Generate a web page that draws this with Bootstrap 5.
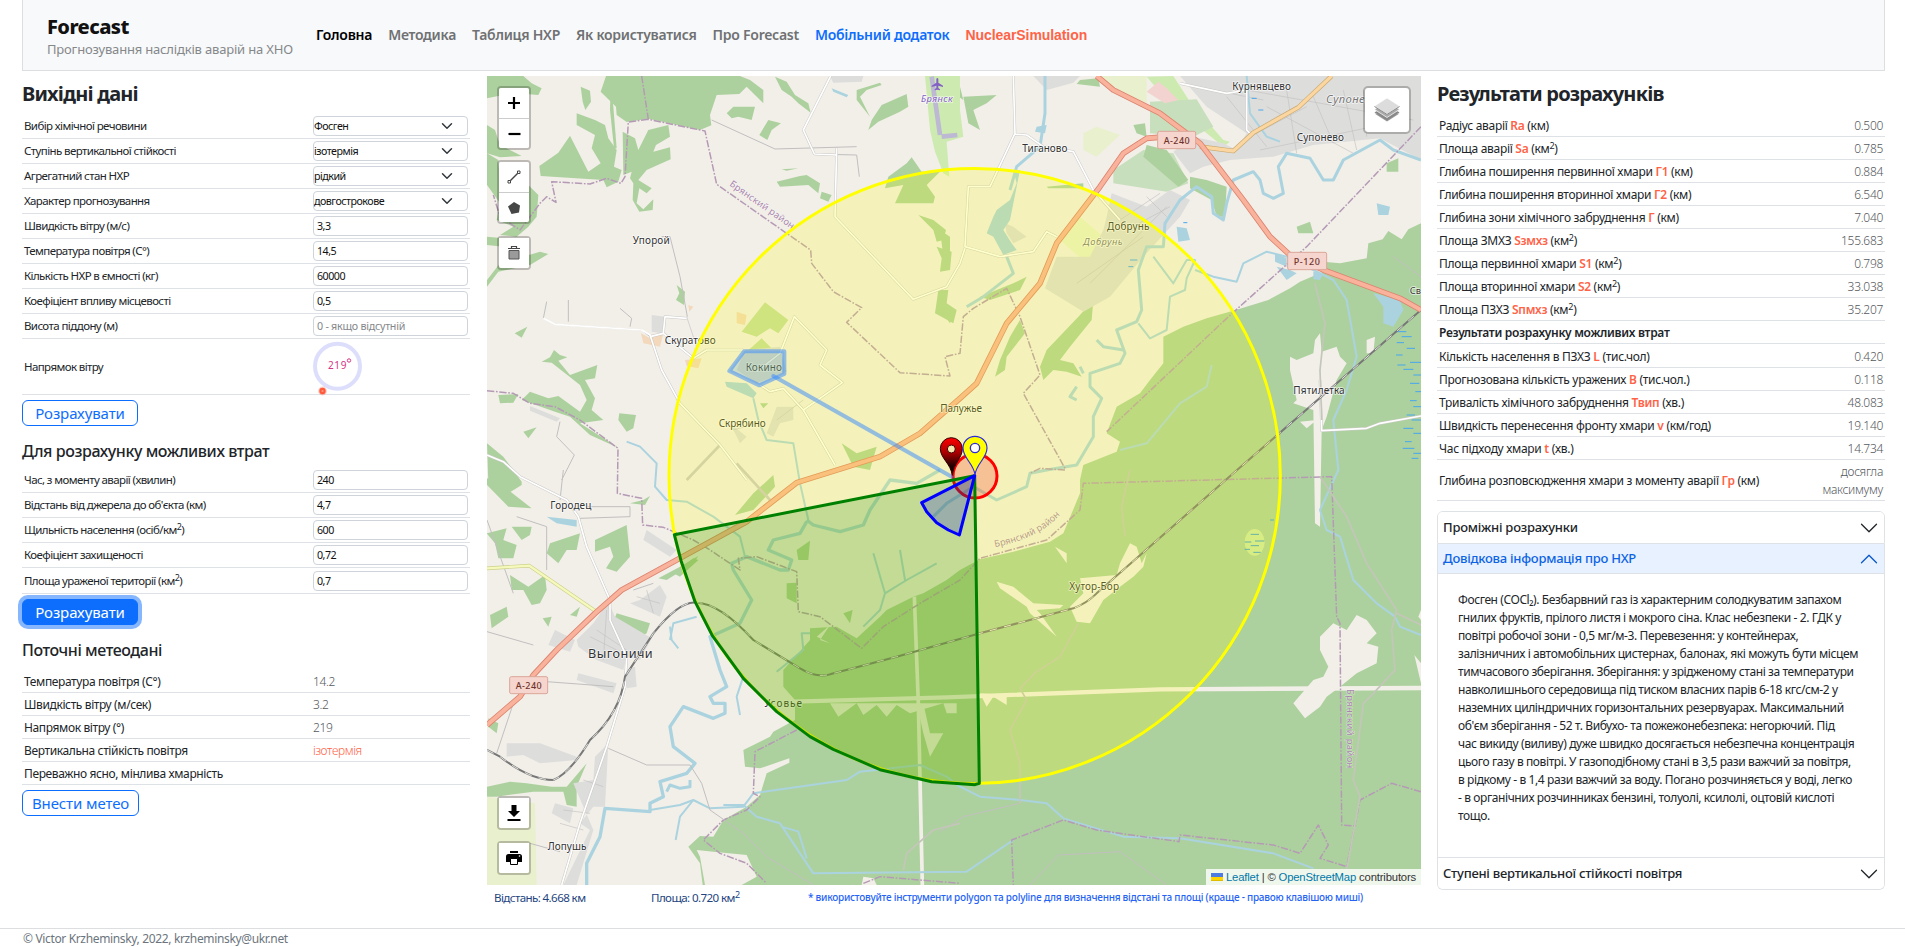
<!DOCTYPE html>
<html lang="uk">
<head>
<meta charset="utf-8">
<title>Forecast</title>
<meta name="viewport" content="width=device-width, initial-scale=1">
<link href="https://cdn.jsdelivr.net/npm/bootstrap@5.3.0/dist/css/bootstrap.min.css" rel="stylesheet">
<style>
body{font-family:"Noto Sans","Open Sans",sans-serif;font-size:12px;color:#212529;height:947px;overflow:hidden}
.top-bar{margin:0 20px 0 22px;height:71px;background:#f8f9fa;border:1px solid #dcdee0;border-top:0;padding:0 24px}
.brand-box{width:269px}
.brand-name{font-size:20px;line-height:24px;font-weight:800;color:#111;letter-spacing:-.55px;padding-top:3px}
.brand-sub{font-size:13px;line-height:20px;color:#85888b;letter-spacing:-.18px}
.top-bar .nav-link{font-size:14px;font-weight:600;padding:0;margin-right:16px;color:#6f7173;letter-spacing:-.26px;white-space:nowrap;line-height:20px}
.top-bar .nav-link.active{color:#000}
.top-bar .nav-link.app{color:#0d6efd}
.top-bar .nav-link.nuc{color:#ff6347;font-family:"Liberation Sans",sans-serif;font-weight:700;letter-spacing:-.08px}
.work-area{grid-template-columns:465px 950px 448px;padding-left:22px;height:857px}
.h-main{font-size:20px;font-weight:700;line-height:46px;height:43px;margin:0;letter-spacing:-.8px}
.h-sub{font-size:16px;font-weight:500;margin:0;letter-spacing:-.42px;line-height:20px}
.line-row{height:25px;border-bottom:1px solid #dee2e6;padding:0 2px;letter-spacing:-.38px;font-weight:400}
.line-row .lbl{width:289px;white-space:nowrap}
.params .lbl{font-size:11.5px;letter-spacing:-.6px}
.line-row .form-control,.line-row .form-select{width:155px;height:20px;min-height:0;font-size:10.7px;line-height:18px;padding:0 3px;color:#111;letter-spacing:-.5px;border-color:#ced4da;border-radius:4px}
.line-row .form-select{padding-left:0}
.line-row .form-control::placeholder{color:#85888b;opacity:1;letter-spacing:-.25px}
.line-row.h23{height:23px;padding-top:2px}
.line-row sup{font-size:9px;top:-.45em}
.line-row b.v{color:#ff6347;font-weight:600}
.res-col .line-row{letter-spacing:-.3px}
.line-row .num{color:#55595d;font-weight:300;text-align:right;line-height:18px}
.wind{height:56px}
.btn-main{width:116px;height:26px;padding:0;font-size:15px;line-height:22px;border-radius:6px;letter-spacing:-.1px}
.btn-glow{box-shadow:0 0 0 4px #86b7fe!important}
.map-box{width:934px;height:809px;margin-top:5px;overflow:hidden}
.map-box svg.tiles{display:block;width:934px;height:809px}
.ctl{border:2px solid rgba(0,0,0,.22);border-radius:4px;background-clip:padding-box;width:34px}
.ctl span{width:30px;height:30px;background:#fff;display:flex;align-items:center;justify-content:center}
.ctl span+span{border-top:1px solid #ccc}
.ctl span:first-child{border-radius:2px 2px 0 0}
.ctl span:last-child{border-radius:0 0 2px 2px}
.ctl-tl{left:10px;top:10px}
.ctl-bl{left:10px;bottom:10px}
.layers{right:10px;top:10px;width:48px;height:48px;background:#fff;border:2px solid rgba(0,0,0,.22);border-radius:5px;background-clip:padding-box}
.attrib{right:0;bottom:0;background:rgba(255,255,255,.8);font:11.3px/16px "Liberation Sans",sans-serif;padding:0 5px;height:16px;width:215px;color:#333;white-space:nowrap;letter-spacing:-.17px}
.attrib a{color:#0078a8;text-decoration:none}
.under-map{height:26px;width:934px;padding-left:7px;color:#1e4580;letter-spacing:-.6px;font-size:11.6px}
.under-map .hint{color:#2563f5;font-size:10px;font-weight:500;letter-spacing:-.25px;padding-bottom:2px;white-space:nowrap}
.accordion{--bs-accordion-btn-padding-x:5px;--bs-accordion-btn-padding-y:0;--bs-accordion-active-bg:#e7f1ff;--bs-accordion-active-color:#0c63e4;--bs-accordion-border-color:#dee2e6;--bs-accordion-body-padding-x:20px;margin-top:10px}
.accordion .accordion-button{height:31px;font-size:13px;font-weight:500;letter-spacing:-.25px;color:#212529;box-shadow:none}
.accordion .accordion-button:not(.collapsed){color:#0c63e4;height:29px}
.accordion .accordion-body{height:284px;border-top:1px solid #dee2e6;padding:17px 20px 0;line-height:18px;white-space:nowrap;letter-spacing:-.4px}
.foot{border-top:1px solid #dcdee0;height:19px;line-height:20px;padding-left:23px;color:#6c757d;letter-spacing:-.35px}
</style>
</head>
<body>
<header class="top-bar d-flex align-items-center">
  <div class="brand-box">
    <div class="brand-name">Forecast</div>
    <div class="brand-sub">Прогнозування наслідків аварій на ХНО</div>
  </div>
  <nav class="nav flex-nowrap">
    <a class="nav-link active" href="#">Головна</a>
    <a class="nav-link" href="#">Методика</a>
    <a class="nav-link" href="#">Таблиця НХР</a>
    <a class="nav-link" href="#">Як користуватися</a>
    <a class="nav-link" href="#">Про Forecast</a>
    <a class="nav-link app" href="#">Мобільний додаток</a>
    <a class="nav-link nuc" href="#">NuclearSimulation</a>
  </nav>
</header>

<main class="work-area d-grid">
  <section style="width:448px">
    <h1 class="h-main">Вихідні дані</h1>
    <div class="params">
    <div class="line-row d-flex align-items-center"><span class="lbl">Вибір хімічної речовини</span><select class="form-select"><option>Фосген</option></select></div>
    <div class="line-row d-flex align-items-center"><span class="lbl">Ступінь вертикальної стійкості</span><select class="form-select"><option>ізотермія</option></select></div>
    <div class="line-row d-flex align-items-center"><span class="lbl">Агрегатний стан НХР</span><select class="form-select"><option>рідкий</option></select></div>
    <div class="line-row d-flex align-items-center"><span class="lbl">Характер прогнозування</span><select class="form-select"><option>довгострокове</option></select></div>
    <div class="line-row d-flex align-items-center"><span class="lbl">Швидкість вітру (м/с)</span><input class="form-control" value="3,3"></div>
    <div class="line-row d-flex align-items-center"><span class="lbl">Температура повітря (С°)</span><input class="form-control" value="14,5"></div>
    <div class="line-row d-flex align-items-center"><span class="lbl">Кількість НХР в ємності (кг)</span><input class="form-control" value="60000"></div>
    <div class="line-row d-flex align-items-center"><span class="lbl">Коефіцієнт впливу місцевості</span><input class="form-control" value="0,5"></div>
    <div class="line-row d-flex align-items-center"><span class="lbl">Висота піддону (м)</span><input class="form-control" placeholder="0 - якщо відсутній"></div>
    <div class="line-row wind d-flex align-items-center"><span class="lbl">Напрямок вітру</span>
      <svg width="56" height="56" viewBox="0 0 56 56" overflow="visible" font-family="Noto Sans"><circle cx="24.5" cy="27.3" r="22.5" fill="none" stroke="#dddefb" stroke-width="4"/><text x="15" y="30" font-size="10" fill="#d63384" textLength="18">219</text><circle cx="36" cy="21.5" r="1.7" fill="none" stroke="#d63384"/><circle cx="9.5" cy="52" r="4.4" fill="#ff6347" opacity=".3"/><circle cx="9.5" cy="52" r="3.2" fill="#ff5a3c"/><circle cx="9.5" cy="52" r="1.1" fill="#ff9a80"/></svg>
    </div>
    </div>
    <button class="btn btn-outline-primary btn-main d-block" style="margin-top:5px">Розрахувати</button>
    <h2 class="h-sub" style="padding-top:15px;height:42px">Для розрахунку можливих втрат</h2>
    <div class="params">
    <div class="line-row d-flex align-items-center"><span class="lbl">Час, з моменту аварії (хвилин)</span><input class="form-control" value="240"></div>
    <div class="line-row d-flex align-items-center"><span class="lbl">Відстань від джерела до об'єкта (км)</span><input class="form-control" value="4,7"></div>
    <div class="line-row d-flex align-items-center"><span class="lbl">Щильність населення (осіб/км<sup>2</sup>)</span><input class="form-control" value="600"></div>
    <div class="line-row d-flex align-items-center"><span class="lbl">Коефіцієнт захищеності</span><input class="form-control" value="0,72"></div>
    <div class="line-row d-flex align-items-center" style="height:26px"><span class="lbl">Площа ураженої території (км<sup>2</sup>)</span><input class="form-control" value="0,7"></div>
    </div>
    <button class="btn btn-primary btn-main btn-glow d-block" style="margin-top:5px">Розрахувати</button>
    <h2 class="h-sub" style="padding-top:15px;height:45px">Поточні метеодані</h2>
    <div class="line-row h23 d-flex align-items-center"><span class="lbl">Температура повітря (С°)</span><span class="num">14.2</span></div>
    <div class="line-row h23 d-flex align-items-center"><span class="lbl">Швидкість вітру (м/сек)</span><span class="num">3.2</span></div>
    <div class="line-row h23 d-flex align-items-center"><span class="lbl">Напрямок вітру (°)</span><span class="num">219</span></div>
    <div class="line-row h23 d-flex align-items-center"><span class="lbl">Вертикальна стійкість повітря</span><span class="num" style="color:#ff6347">ізотермія</span></div>
    <div class="line-row h23 d-flex align-items-center"><span class="lbl">Переважно ясно, мінлива хмарність</span></div>
    <button class="btn btn-outline-primary btn-main d-block" style="margin-top:5px;width:117px">Внести метео</button>
  </section>

  <section>
    <div class="map-box position-relative">
      <svg class="tiles" viewBox="21 18 2802 2427" font-family="Noto Sans" stroke-linejoin="round">
        <rect x="0" y="0" width="2850" height="2500" fill="#f2efe9"/>
        <!-- woods -->
        <g fill="#add19e">
          <path d="M2823,460 2785,478 2765,508 2725,483 2708,508 2665,520 2660,565 2580,580 2530,575 2530,605 2460,635 2430,655 2365,690 2260,722 2180,745 2110,770 2050,800 2050,880 2010,930 1980,970 1910,1010 1880,1090 1920,1115 1910,1145 1810,1185 1800,1230 1800,1270 1750,1390 1710,1415 1600,1445 1500,1468 1440,1500 1400,1530 1330,1570 1300,1580 1220,1620 1200,1640 1130,1705 1070,1670 990,1675 990,1710 910,1800 910,1850 945,1890 945,1950 880,1985 870,2000 790,2040 795,2090 840,2095 928,2065 928,2078 860,2110 840,2175 800,2210 730,2250 700,2300 660,2298 625,2330 660,2380 668,2445 675,2445 660,2360 650,2340 700,2345 800,2355 830,2420 785,2445 2823,2445Z"/>
          <path d="M378,18 362,65 408,110 410,135 440,156 505,146 660,180 694,166 690,135 710,75 778,72 800,50 850,100 850,60 810,30 780,18Z"/>
          <path d="M302,50 330,62 333,95 316,120 308,95Z"/>
          <path d="M290,130 345,150 375,165 385,205 410,240 402,290 425,300 415,335 380,352 370,330 182,318 178,288 235,248 270,197 325,305 362,280 335,235 345,195 290,165Z"/>
          <path d="M428,185 465,205 475,240 505,180 565,165 570,200 528,225 520,245 570,232 572,268 500,300 475,330 515,355 500,370 478,355 470,400 490,418 520,388 518,420 478,425 458,390 460,340 450,325 455,305 430,315Z"/>
          <path d="M392,45 400,110 410,235 402,235 390,120Z"/>
          <path d="M21,18H130L155,40 185,55 175,75 110,70 55,78 21,85Z M21,165 45,180 60,225 125,258 60,262 21,250Z M21,250 55,270 60,340 130,330 175,375 170,440 145,470 110,500 60,495 100,470 50,450 60,400 21,345Z M21,500 70,505 70,530 21,525Z M130,560 180,545 205,552 150,585 55,605 21,650 21,630 60,580Z"/>
          <path d="M104,790 142,770 125,803Z M222,840 240,855 262,862 235,872 270,915 352,885 345,925 315,930 345,985 335,1020 370,1050 300,1060 340,1085 418,1135 330,1095 270,1040 225,1025 125,990 150,965 205,985 235,978 300,1025 320,990 300,945 262,915 215,878 185,875 210,862Z M55,975 115,972 100,998 60,1000Z M418,1030 468,1035 460,1075 440,1085 415,1050Z M130,1085 170,1072 145,1105Z"/>
          <path d="M590,645 615,665 612,705 588,690 598,670Z M740,130 760,110 825,110 815,150 775,140 755,145Z M865,150 903,160 875,180 862,210 838,195Z M885,20 920,35 945,75 985,100 992,128 955,100 935,80 905,60Z M1130,60 1200,38 1205,45 1160,60 1140,80 1170,140 1130,90Z M1205,105 1280,72 1285,110 1260,125 1195,155 1165,180 1175,150Z M890,335 960,318 980,315 1020,340 1015,370 985,345 900,350Z M905,298 955,295 920,302Z M1280,280 1295,262 1325,305 1380,305 1340,345 1365,380 1360,400 1270,400 1245,400 1270,345 1215,355 1225,320Z M1315,435 1360,450 1398,480 1390,510 1370,515 1360,480Z M1370,530 1415,545 1410,600 1380,605 1385,565Z M1025,365 1055,375 1045,395 1020,385Z"/>
          <path d="M1400,55 1440,50 1450,90Z M1450,80 1550,75 1520,100 1480,120 1500,180 1465,160Z M1375,660 1405,660 1400,700 1430,720 1420,760 1365,730Z M1085,1120 1130,1150 1190,1130 1170,1200 1120,1190Z M840,1000 865,1000 850,1015Z"/>
          <!-- south-west groves -->
          <path d="M21,1120 70,1160 125,1235 125,1245 85,1270 25,1240Z M21,1225 60,1240 155,1315 85,1310 21,1245Z M20,1390 80,1375 70,1410 110,1425 100,1465 55,1465 45,1420Z M95,1370 155,1370 150,1395 125,1410Z M210,1420 300,1390 290,1440 260,1440 235,1480 200,1450Z M345,1410 440,1365 450,1460 410,1505 378,1495 400,1460 390,1430 345,1445Z M90,1515 145,1550 195,1515 200,1560 180,1600 155,1605 130,1560 95,1560Z M30,1635 80,1610 85,1640 35,1675Z M188,1645 215,1640 205,1670Z M410,1630 510,1660 500,1690 475,1705 400,1655Z M535,1525 600,1490 655,1458 640,1480 560,1530Z M270,1635 300,1610 290,1640Z M21,2150 90,2135 140,2140 215,2150 260,2150 320,2080 290,2150 290,2210 260,2205 250,2165 160,2165 50,2180 21,2180Z M25,1945 55,1960 50,1990 25,1970Z M490,1290 510,1278 495,1305 450,1300Z"/>
          <!-- river-side woods in the centre and north -->
          <path d="M1800,735 1840,690 1835,750 1770,830 1740,870 1780,880 1805,920 1760,905 1720,900 1690,930 1680,890 1700,840Z M1620,750 1635,790 1580,860 1575,900 1545,920 1560,870 1590,800Z M1500,680 1600,640 1640,620 1620,660 1530,690Z M1700,350 1810,340 1810,355 1705,355Z M1960,165 1995,160 2000,200 1970,190Z M1800,30 1855,25 1860,50 1790,42Z M2450,470 2490,455 2500,490 2455,490Z M2720,280 2755,265 2755,305 2720,305Z M1380,480 1410,500 1410,545 1390,560Z M1380,720 1420,740 1410,760Z M820,1270 880,1215 885,1250 820,1320 765,1335Z M950,1440 990,1412 985,1470 955,1470Z M920,1540 950,1538 950,1600 920,1585Z M1090,1630 1118,1620 1110,1660Z M580,1510 640,1465 655,1470 600,1520Z"/>
        </g>
        <!-- pastures, meadows and airfield -->
        <path fill="#cdebb0" d="M1335,18H1440V120L1450,200 1400,215 1408,320 1390,310 1365,245 1350,180Z M2000,20 2080,18 2130,95 2230,210 2250,215 2230,230 2180,190 2060,90Z"/>
        <path fill="#c3dd9f" d="M785,785 855,697 925,750 895,790 870,775 830,800Z M800,845 845,805 880,840 850,870Z"/>
        <path fill="#e9f0cd" d="M1850,18H2000V100L1890,55Z M1810,190 1850,170 1920,195 1850,260 1810,240Z M21,2180 165,2200 170,2445 21,2445Z M1740,510 1800,440 1870,500 1820,580Z"/>
        <path fill="#c8dfbd" d="M2010,95 2150,88 2200,170 2140,200 2010,190Z M1900,300 1990,240 2080,250 2125,340 2060,365 1900,340Z"/>
        <path fill="#add19e" d="M2060,240 2125,330 2095,350 1990,260 2000,225Z M2130,320 2180,330 2240,350 2235,440 2210,440 2195,390 2130,355Z"/>
        <path fill="#f3d3cf" d="M2000,65 2035,35 2060,55 2095,90 2055,100Z"/>
        <path fill="#f3d8bb" d="M483,790 510,805 550,790 540,830 490,820Z M770,725 800,735 795,765 770,760Z M615,870 665,865 655,895 620,888Z M625,705 640,710 628,725Z"/>
        <path fill="none" stroke="#bdb8d3" stroke-width="14" d="M1355,20 1380,195 M1385,200 1432,195"/>
        <!-- built-up areas -->
        <g fill="#dddddc">
          <path d="M2100,18H2823V270L2700,205 2500,225 2380,260 2250,270 2170,290 2130,310 2080,245 2140,200 2230,220 2270,240 2300,190 2180,110Z"/>
          <path d="M2000,410 2070,360 2130,390 2100,440 1990,560 1890,680 1810,725 1695,655 1730,560 1830,560 1870,480 1880,440 1895,370Z"/>
          <path d="M1050,18H1150L1145,35 1060,38Z M1660,18H1800L1780,38 1700,60Z M515,735 555,740 545,790 515,785Z M795,840 900,830 920,905 830,940 770,900Z M1575,460 1600,470 1640,500 1600,520 1580,490Z"/>
          <path d="M385,1595 405,1640 515,1705 480,1770 440,1760 430,1800 350,1770 295,1730 290,1710 340,1660Z M480,1590 540,1545 560,1580 540,1640 450,1600Z M225,1680 285,1710 270,1745 205,1725Z M440,1800 465,1790 470,1850 440,1855Z M295,1810 410,1840 400,1870 290,1830Z M345,2060 385,2020 375,2210 340,2210 300,2260 330,2280 250,2445 290,2445 340,2280 280,2140 340,2130Z M500,1380 590,1440 570,1460 490,1410Z M80,2020 180,2020 290,2060 290,2070 180,2080 130,2055 80,2060Z M225,2200 280,2215 270,2260 215,2230Z M150,1008 240,1045 230,1055 150,1022Z M750,1060 800,1100 780,1120Z M890,1010 940,1010 940,1050 900,1060 880,1100 860,1090Z"/>
        </g>
        <g fill="none" stroke="#c4c3c3" stroke-width="2">
          <path d="M2300,60 2800,150 M2360,110 2620,250 M2420,60 2450,250 M2500,80 2560,220 M2590,60 2630,240 M2650,60 2660,200 M2310,200 2480,110 M2340,240 2680,170 M2240,80 2360,230 M2200,60 2350,90 M1920,450 2040,370 M1940,480 2070,410 M1830,640 2060,410 M1790,640 1990,500 M2000,380 2060,440"/>
          <path d="M330,1700 410,1740 M350,1680 440,1740 M380,1620 370,1770 M470,1580 540,1600 M500,1560 520,1630 M250,2220 330,2230 M240,2260 310,2280 M310,2130 370,2150 M620,740 650,830 M760,1080 830,1060 M890,1050 970,990"/>
        </g>
        <!-- clearings in the eastern forest -->
        <g fill="#f2efe9">
          <path d="M2505,810 2520,790 2525,845 2570,830 2580,860 2600,880 2570,930 2540,1040 2525,1080 2520,1370 2505,1360 2500,1020 2440,1000 2450,990 2430,900 2430,860 2450,870 2500,850Z M2460,1055 2510,1050 2480,1075Z M2660,810 2685,800 2680,850 2660,850Z"/>
          <path d="M2520,1700 2560,1660 2600,1680 2630,1635 2660,1650 2690,1690 2660,1720 2695,1730 2690,1780 2630,1810 2580,1850 2540,1880 2520,1910 2475,1945 2440,1900 2500,1830 2530,1820 2545,1790 2520,1740Z M2823,1620 2815,1640 2823,1650Z M2803,1755 2823,1780 2823,1840Z M1150,2420 1180,2425 1190,2445 1145,2445Z"/>
          <path d="M1800,1525 1910,1515 1920,1480 1950,1420 1970,1430 1985,1480 2000,1450 1990,1490 1960,1520 1920,1550 1870,1590 1830,1660 1790,1655 1770,1610 1810,1570Z M1550,1535 1600,1550 1660,1600 1750,1605 1740,1615 1670,1620 1680,1630 1730,1700 1650,1630 1640,1610 1560,1555Z M1725,1430 1760,1450 1760,1480Z M1010,1700 1050,1665 1020,1710 1050,1720Z"/>
          <path d="M1050,1900H1430V1930H1400L1390,1900 1290,1930 1250,1905 1220,1940 1190,1905 1150,1935 1130,1900 1075,1940Z M1310,1900H1330L1350,1990 1390,1990 1350,2060 1330,1990Z M1500,1870 1580,1875 1580,1905 1540,1880 1520,1910Z"/>
        </g>
        <g fill="none" stroke="#f2efe9">
          <path stroke-width="13" d="M940,1895 1400,1882 2040,1858 2823,1854"/>
          <path stroke-width="11" d="M1303,1580 1315,1900 1327,2445"/>
        </g>
        <!-- rivers -->
        <g fill="none" stroke="#aad3df" stroke-width="9">
          <path d="M1695,18 1695,130 1680,230 1610,290 1590,360 M1580,560 1600,610 1510,680 1460,710"/>
          <path d="M2823,270 2740,240 2700,210 2590,270 2560,330 2530,330 2490,265 2420,250 2395,290 2410,370 2380,385 2350,370 2340,330 2320,305 2260,330 2240,400 2230,450 2200,430 2195,380 2150,350 2100,390 2055,460 2050,530 2000,530 1975,600 1985,720 1970,755 1910,780 1935,850 1920,880 1830,910 1830,950 1865,985 1840,1040 1840,1100 1790,1185 1700,1200 1650,1210 1640,1250 1550,1290 1480,1250 1400,1300 1360,1340"/>
          <path stroke-width="6" d="M2020,560 2080,640 2120,570 2145,570 2120,625 2115,660 2070,680 2060,780 2010,805 1975,760 M2145,600 2200,620 2270,635 2290,580 2360,545 2420,560 2500,600 2560,630 2600,690 2630,860 2600,960 2560,1050 2575,1200 2520,1320 2540,1380 2580,1400 2620,1530 2690,1600 2745,1640 2760,1670 2823,1695 M2300,18 2310,130 2360,200 2400,215"/>
          <path stroke-width="10" d="M1380,1200 1310,1240 1230,1230 1170,1320 1150,1365 1080,1385 1000,1365 980,1350 M980,1355 960,1390 880,1410 865,1440 935,1470 925,1500 900,1500 800,1460 755,1480 760,1500 815,1590 780,1660 690,1700 720,1800 740,1850 690,1880 700,1900 735,1900 735,1930 700,1945 610,1910 570,1970 580,2030 645,2080 620,2110 540,2135 550,2180 510,2200 510,2225 375,2215 360,2300 320,2380 320,2445"/>
          <path stroke-width="6" d="M820,985 835,1050 860,1110 940,1120 960,1240 985,1350 M440,1115 480,1130 530,1180 525,1250 560,1290 620,1295 700,1340 780,1400 795,1460 M510,2220 600,2205 640,2190 690,2215 790,2210 820,2170 1100,2130 1140,2105 1320,2085 1400,2120 1440,2150 1500,2180 1620,2190 1700,2200 1750,2245 1930,2300 2100,2305 2380,2350 2500,2395"/>
          <path stroke-width="6" d="M640,2190 600,2240 587,2310 M570,1710 580,1660 650,1640 M570,1670 575,1710 595,1735 M730,2205 790,2205 830,2240 900,2260 1000,2410 1460,2405 1600,2310 M905,2270 955,2285 980,2365 M790,1820 770,1880 780,1935 M990,1690 965,1690 970,1740 890,1805 M1150,1670 1200,1620 1215,1570 1280,1530 1370,1480 M1180,1450 1215,1570 M1260,1440 1275,1530 M1920,1140 2000,1120 2100,1000 2180,950 2195,885"/>
          <path d="M560,2165 570,2145 600,2155 630,2150 630,2130 M1850,810 1870,830 1930,840 M1800,890 1810,910 M1790,950 1770,980 1790,990"/>
        </g>
        <g fill="#aad3df">
          <path d="M1590,390 1610,340 1600,300 1620,300 1590,450 1570,480 1595,520 1610,540 1570,555 1540,500 1520,490 1540,440 1550,420Z M2090,470 2120,475 2130,510 2095,515Z M2385,550 2420,565 2420,590 2385,575Z M2390,590 2430,600 2450,610 2420,630Z M2680,670 2760,690 2770,720 2740,770 2710,760 2710,710Z M735,935 800,940 830,970 820,985 740,950Z M2690,400 2730,410 2725,435 2695,435Z M1055,55 1105,75 1100,82 1060,65Z M200,1340 290,1350 290,1370 230,1360Z M1670,170 1700,165 1695,190 1665,185Z M2500,605 2530,610 2520,630 2500,628Z"/>
        </g>
        <g fill="none" stroke="#46a7ee" stroke-width="3">
          <path d="M2744,785h35M2765,800h30M2750,818h22M2780,835h25M2748,855h20M2790,877h33M2752,885h25M2770,898h30M2800,915h23M2790,940h28M2806,965h17M2790,992h20M2800,1010h23M2780,1035h25M2795,1050h28M2770,1075h30M2800,1090h23M2775,1115h20M2768,1135h35M2800,1150h23M2795,1165h20M2315,85h15M2335,120h15M1950,570h22M1945,590h15M2110,458h12"/>
        </g>
        <ellipse cx="2324" cy="1417" rx="30" ry="40" fill="#cfe8a6"/>
        <path stroke="#3f9fd0" stroke-width="3" d="M2312,1393h25M2294,1416h20M2325,1413h28M2312,1427h25M2294,1438h16M2320,1447h22M2370,1350h12"/>
        <!-- administrative boundaries -->
        <g fill="none" stroke="#b59ab6" stroke-width="4.5" stroke-dasharray="22 5 5 5">
          <path d="M485,18 505,148 675,183 710,343 920,490 992,540 995,580 1060,665 1145,713 1100,757 1260,908 1410,918 1395,860 1440,850 1450,740 1480,715 1580,655 1620,740 1680,915 1630,970 1755,1195 M1755,1200 1680,1195 1650,1210 M505,148 445,156 435,320 423,340 380,325 330,342 215,335 228,397 200,380 180,400 120,480 60,440 40,375 M21,962 100,970 150,1000 225,1010 300,1050 414,1135 412,1270 485,1285 488,1365 550,1372 640,1410 690,1440 780,1500 775,1465 830,1460 950,1505 955,1625 1020,1640 1145,1735 1210,1670 1320,1600 1440,1530 1500,1465 1700,1410 1800,1320 1810,1240 2555,1220 2570,1640 2580,1660 2585,2265 2630,2268"/>
          <path d="M2823,170 2480,530 2240,745 1880,1085 M2823,2165 2735,2140 2640,2190 2600,2390 2520,2365 2545,2325 2515,2265 2460,2350 2380,2325 2100,2295 2097,2315 1850,2280 1750,2250 1595,2310 1600,2445 M950,1980 825,2045 820,2170 840,2180 800,2220 730,2250 670,2310 720,2350 800,2380 860,2440 M1150,2440 1200,2420 1440,2440"/>
        </g>
        <!-- local roads -->
        <g fill="none" stroke="#c1bfbf" stroke-width="3">
          <path d="M695,150 885,237 1130,230 M1000,252 1130,255 1138,320 M200,695 190,745 225,763 485,780 510,800 M545,500 570,500 600,620 622,740 M265,755 265,690 M450,770 455,745 420,715 M21,1685 160,1725 M200,1835 400,1850 M385,2035 500,2085 630,2085 665,2140 690,2220 790,2290 860,2360 1000,2445 M21,1350 100,1570 M110,1340 200,1370 200,1500 M1380,2285 1450,2240 1620,2200 M1650,2445 1735,2355 1920,2345 2060,2445"/>
          <path d="M240,1055 230,1100 283,1155 245,1230 M250,1200 240,1290 M320,1310 450,1310 450,1340 300,1345 M2740,560 2823,620 M100,1900 50,2050 M150,2320 240,2345 M460,1560 520,1540"/>
        </g>
        <g fill="none" stroke="#cbc9c7" stroke-width="8">
          <path d="M1052,18 970,180 1003,252 1070,255 M1070,235 1065,440 1300,688 1400,650 1440,580 1455,535 M1600,18 1605,190 1530,350 1465,350 1455,530 1560,560 1660,545 1700,485 1730,500 M1605,192 1640,195 1690,230 1780,245 1840,360 1920,450 M510,795 545,900 600,1000 720,1125 800,1230 M550,790 555,740 620,745 M510,800 550,790 640,865 680,840 790,840 M830,905 900,850 943,740 1040,840 1020,885 1087,938 970,1020 M840,945 870,965 910,955 970,1020 1065,1185 M21,1155 70,1175 120,1220 260,1290 295,1340 320,1430 390,1590 390,1650 440,1760 435,1850 380,2030 300,2260 245,2445 M2100,40 2240,70 2300,60 2300,180 2310,190 M2520,930 2525,1082 2660,1075 2700,1060 2823,1038 M720,1125 620,1230 M770,1180 870,1290"/>
          <path stroke="#fff" stroke-width="5" d="M1052,18 970,180 1003,252 1070,255 M1070,235 1065,440 1300,688 1400,650 1440,580 1455,535 M1600,18 1605,190 1530,350 1465,350 1455,530 1560,560 1660,545 1700,485 1730,500 M1605,192 1640,195 1690,230 1780,245 1840,360 1920,450 M190,745 225,763 485,780 510,795 545,900 600,1000 720,1125 800,1230 M550,790 555,740 620,745 M510,800 550,790 640,865 680,840 790,840 M830,905 900,850 943,740 1040,840 1020,885 1087,938 970,1020 M840,945 870,965 910,955 970,1020 1065,1185 M21,1155 70,1175 120,1220 260,1290 295,1340 320,1430 390,1590 390,1650 440,1760 435,1850 380,2030 300,2260 245,2445 M2100,40 2240,70 2300,60 2300,180 2310,190 M2520,930 2525,1082 2660,1075 2700,1060 2823,1038"/>
        </g>
        <path fill="none" stroke="#c3c6b9" stroke-width="5" d="M1950,1200 1925,1310 1935,1400 M1795,1660 1740,1760 1670,1805 1620,1855 1640,1890 1590,1980 1620,2080 1620,2200 M2505,640 2535,760 2520,900 2525,1050 M2520,1220 2600,1340 2660,1480 2750,1620 2735,1680 2745,1800 2680,1870 2650,1900 2620,2130 2640,2180 2600,2400 M2750,1630 2823,1665 M1440,2260 1360,2280 1280,2350 1270,2400"/>
        <!-- railways -->
        <g fill="none">
          <path stroke="#777" stroke-width="6" d="M21,2040 60,2060 Q150,2130 220,2130 Q270,2110 330,2010 Q420,1930 435,1820 L520,1690 Q600,1590 650,1598 Q720,1600 820,1710 L960,1795 Q1010,1825 1050,1813 L1250,1760 1500,1690 1780,1615 Q1820,1600 1850,1570 L2260,1210 2823,720"/>
          <path stroke="#e4e4e0" stroke-width="3" stroke-dasharray="22 22" d="M21,2040 60,2060 Q150,2130 220,2130 Q270,2110 330,2010 Q420,1930 435,1820 L520,1690 Q600,1590 650,1598 Q720,1600 820,1710 L960,1795 Q1010,1825 1050,1813 L1250,1760 1500,1690 1780,1615 Q1820,1600 1850,1570 L2260,1210 2823,720"/>
        </g>
        <!-- main roads -->
        <g fill="none">
          <path stroke="#cdd08a" stroke-width="11" d="M21,1495 148,1487 345,1622"/><path stroke="#f5f9bc" stroke-width="7" d="M21,1495 148,1487 345,1622"/>
          <path stroke="#c9a86f" stroke-width="14" d="M2555,18 2455,112 2320,188 2260,243 2160,230"/><path stroke="#fbd6a0" stroke-width="10" d="M2555,18 2455,112 2320,188 2260,243 2160,230"/>
          <path stroke="#dc846f" stroke-width="17" d="M21,1965 120,1880 160,1815 230,1740 345,1630 425,1560 800,1355 950,1238 1200,1160 1320,1090 1440,985 1490,940 1540,840 1580,760 1680,640 1730,520 1860,350 1930,250 2000,205 2060,200 M1850,18 1900,60 2040,130 2160,220 2290,390 2370,500 2430,555 2530,600 2760,685 2823,720"/>
          <path stroke="#f9b29c" stroke-width="12" d="M21,1965 120,1880 160,1815 230,1740 345,1630 425,1560 800,1355 950,1238 1200,1160 1320,1090 1440,985 1490,940 1540,840 1580,760 1680,640 1730,520 1860,350 1930,250 2000,205 2060,200 M1850,18 1900,60 2040,130 2160,220 2290,390 2370,500 2430,555 2530,600 2760,685 2823,720"/>
        </g>
        <g fill="#f5d5cd" stroke="#dba79a" stroke-width="3"><rect x="2033" y="184" width="114" height="52" rx="5"/><rect x="2423" y="547" width="117" height="52" rx="5"/><rect x="89" y="1820" width="114" height="51" rx="5"/></g>
        <g fill="#70332c" font-size="27" font-weight="500"><text x="2051" y="222" textLength="78">А-240</text><text x="2441" y="584" textLength="79">Р-120</text><text x="107" y="1856" textLength="78">А-240</text></g>
        <!-- place names -->
        <g fill="#333" font-size="30" stroke="#fff" stroke-opacity=".7" stroke-width="5" paint-order="stroke">
          <text x="458" y="522" textLength="111">Упорой</text>
          <text x="554" y="821" textLength="153">Скуратово</text>
          <text x="797" y="903" textLength="109">Кокино</text>
          <text x="716" y="1071" textLength="141">Скрябино</text>
          <text x="1381" y="1025" textLength="125">Палужье</text>
          <text x="1627" y="247" textLength="135">Тиганово</text>
          <text x="1881" y="480" textLength="127">Добрунь</text>
          <text x="2257" y="59" textLength="176">Курнявцево</text>
          <text x="2450" y="213" textLength="142">Супонево</text>
          <text x="2440" y="971" textLength="154">Пятилетка</text>
          <text x="2789" y="671" font-size="28">Св</text>
          <text x="1768" y="1560" textLength="149">Хутор-Бор</text>
          <text x="211" y="1318" textLength="123">Городец</text>
          <text x="324" y="1763" font-size="38" textLength="194">Выгоничи</text>
          <text x="852" y="1910" textLength="114">Усовье</text>
          <text x="203" y="2341" textLength="116">Лопушь</text>
          <g fill="#777" font-style="italic"><text x="1810" y="525" font-size="28" textLength="118">Добрунь</text><text x="2538" y="98" font-size="34" textLength="116">Супоне</text></g>
          <text x="1323" y="95" fill="#8461c4" font-style="italic" font-size="28" textLength="95">Брянск</text>
        </g>
        <path fill="#8461c4" d="M1369,26q3,-4 6,0V38l14,9v4l-14,-4v7l5,4v3l-8,-2 -8,2v-3l5,-4v-7l-14,4v-4l14,-9Z"/>
        <g fill="#a884ac" font-size="28" stroke="#fff" stroke-opacity=".5" stroke-width="3" paint-order="stroke">
          <text transform="translate(747,346) rotate(35)" textLength="230">Брянский район</text>
          <text transform="translate(2600,1857) rotate(90)" textLength="238">Брянский район</text>
          <path id="lb" d="M1545,1432Q1700,1400 1760,1310" fill="none" stroke="none"/><text><textPath href="#lb">Брянский район</textPath></text>
        </g>
        <!-- hazard zones -->
        <ellipse cx="1484" cy="1218" rx="917" ry="922.5" fill="#ff0" fill-opacity=".2" stroke="#ff0" stroke-width="9"/>
        <circle cx="1485" cy="1218" r="66" fill="red" fill-opacity=".2" stroke="red" stroke-width="9"/>
        <path d="M1484,1217 583,1394 603,1472 645,1595 697,1697 790,1825 890,1925 990,2000 1060,2038 1200,2099 1355,2135 1485,2144 1498,2140Z" fill="green" fill-opacity=".2" stroke="green" stroke-width="9"/>
        <path d="M1484,1217 1325,1298 1340,1325 1370,1358 1405,1380 1438,1395Z" fill="#00f" fill-opacity=".2" stroke="#00f" stroke-width="9"/>
        <g fill="none" stroke="#38f" stroke-opacity=".5" stroke-width="12"><path d="M792,844H913V912L838,946 748,903Z" fill="#38f" fill-opacity=".2"/><path stroke-linecap="round" d="M880,918 1415,1220"/></g>
        <!-- markers -->
        <defs><linearGradient id="rd" x1="0" y1="0" x2="0" y2="1"><stop offset="0" stop-color="#f00"/><stop offset=".4" stop-color="#a00"/><stop offset=".75" stop-color="#200"/><stop offset="1" stop-color="#000"/></linearGradient></defs>
        <path d="M1417,1216C1412,1180 1381,1165 1381,1136a33,33 0 0 1 66,0C1447,1165 1420,1180 1417,1216Z" fill="url(#rd)" stroke="#300" stroke-width="3"/><circle cx="1414" cy="1137" r="12" fill="#f7e9b0" stroke="#400" stroke-width="3"/>
        <path d="M1485,1214C1481,1180 1449,1165 1449,1134a36,35 0 0 1 72,0C1521,1165 1489,1180 1485,1214Z" fill="#ff0" stroke="#2a2ae0" stroke-width="3.5"/><circle cx="1485" cy="1134" r="14" fill="#fff" stroke="#2a2ae0" stroke-width="4"/>
      </svg>
      <div class="position-absolute ctl-tl">
        <div class="ctl"><span><svg width="14" height="14"><path d="M7 1v12M1 7h12" stroke="#000" stroke-width="2.2"/></svg></span><span><svg width="14" height="14"><path d="M1.500 7h12" stroke="#000" stroke-width="2.200"/></svg></span></div>
        <div class="ctl" style="margin-top:10px">
          <span><svg width="14" height="14" fill="none" stroke="#464646"><path d="M3 11 11 3" stroke-width="1.500"/><path d="M1 10.500h2.500V13H1ZM10.500 1H13v2.500h-2.500Z" fill="#fff"/></svg></span>
          <span><svg width="14" height="14"><path d="M1 5.500 7 1l6 3.500-1 7L4.500 13Z" fill="#464646"/></svg></span></div>
        <div class="ctl" style="margin-top:12px"><span><svg width="14" height="16"><path d="M2 5.500h10v8.500H2Z" fill="#9a9a9a" stroke="#555"/><path d="M1 3.500h12M4.500 3V1.500h5V3" fill="none" stroke="#464646" stroke-width="1.200"/></svg></span></div>
      </div>
      <div class="position-absolute ctl-bl">
        <div class="ctl"><span><svg width="14" height="17"><path d="M4.500 0h5v6H13L7 12 1 6h3.500ZM.5 14h13v2H.5Z"/></svg></span></div>
        <div class="ctl" style="margin-top:11px"><span><svg width="16" height="14"><path d="M4 0h8v2H4ZM2.500 3h11A2.500 2.500 0 0 1 16 5.500V11H0V5.500A2.500 2.500 0 0 1 2.500 3Z"/><path d="M4.500 7.500h7v6h-7Z" fill="#fff" stroke="#000"/><circle cx="13.500" cy="5" r=".8" fill="#fff"/></svg></span></div>
      </div>
      <div class="position-absolute layers d-flex align-items-center justify-content-center"><svg width="26" height="26" viewBox="0 0 26 26"><path d="M.5 16.500 13 24.500l12.500-8L13 19Z" fill="#999"/><path d="M.5 15.500 13 23.500l12.500-8-3-2L13 19 3.500 13.500Z" fill="#888"/><path d="M.5 12.500 13 20.500l12.500-8-3-2L13 16 3.500 10.500Z" fill="#aaa" stroke="#fff" stroke-width=".7"/><path d="M.5 9 13 1l12.500 8L13 17.500Z" fill="#dcdcdc" stroke="#fff" stroke-width=".7"/><path d="M.5 9.500 13 17.500 25.500 9.500" fill="none" stroke="#888"/></svg></div>
      <div class="position-absolute attrib"><svg width="12" height="8" style="vertical-align:0"><path fill="#4C7BE1" d="M0 0h12v4H0z"/><path fill="#FFD500" d="M0 4h12v3H0z"/><path fill="#E0BC00" d="M0 7h12v1H0z"/></svg> <a href="#">Leaflet</a> | © <a href="#">OpenStreetMap</a> contributors</div>
    </div>
    <div class="under-map d-flex align-items-center">
      <span style="width:157px">Відстань: 4.668 км</span><span style="width:157px">Площа: 0.720 км<sup style="font-size:9px">2</sup></span><span class="hint">* використовуйте інструменти polygon та polyline для визначення відстані та площі (краще - правою клавішою миші)</span>
    </div>
  </section>

  <section class="res-col">
    <h1 class="h-main">Результати розрахунків</h1>
    <div class="line-row h23 d-flex align-items-center justify-content-between"><span>Радіус аварії <b class="v">Ra</b> (км)</span><span class="num">0.500</span></div>
    <div class="line-row h23 d-flex align-items-center justify-content-between"><span>Площа аварії <b class="v">Sa</b> (км<sup>2</sup>)</span><span class="num">0.785</span></div>
    <div class="line-row h23 d-flex align-items-center justify-content-between"><span>Глибина поширення первинної хмари <b class="v">Г1</b> (км)</span><span class="num">0.884</span></div>
    <div class="line-row h23 d-flex align-items-center justify-content-between"><span>Глибина поширення вторинної хмари <b class="v">Г2</b> (км)</span><span class="num">6.540</span></div>
    <div class="line-row h23 d-flex align-items-center justify-content-between"><span>Глибина зони хімічного забруднення <b class="v">Г</b> (км)</span><span class="num">7.040</span></div>
    <div class="line-row h23 d-flex align-items-center justify-content-between"><span>Площа ЗМХЗ <b class="v">Sзмхз</b> (км<sup>2</sup>)</span><span class="num">155.683</span></div>
    <div class="line-row h23 d-flex align-items-center justify-content-between"><span>Площа первинної хмари <b class="v">S1</b> (км<sup>2</sup>)</span><span class="num">0.798</span></div>
    <div class="line-row h23 d-flex align-items-center justify-content-between"><span>Площа вторинної хмари <b class="v">S2</b> (км<sup>2</sup>)</span><span class="num">33.038</span></div>
    <div class="line-row h23 d-flex align-items-center justify-content-between"><span>Площа ПЗХЗ <b class="v">Sпмхз</b> (км<sup>2</sup>)</span><span class="num">35.207</span></div>
    <div class="line-row h23 d-flex align-items-center fw-semibold">Результати розрахунку можливих втрат</div>
    <div class="line-row h23 d-flex align-items-center justify-content-between" style="height:24px"><span>Кількість населення в ПЗХЗ <b class="v">L</b> (тис.чол)</span><span class="num">0.420</span></div>
    <div class="line-row h23 d-flex align-items-center justify-content-between"><span>Прогнозована кількість уражених <b class="v">В</b> (тис.чол.)</span><span class="num">0.118</span></div>
    <div class="line-row h23 d-flex align-items-center justify-content-between"><span>Тривалість хімічного забруднення <b class="v">Твип</b> (хв.)</span><span class="num">48.083</span></div>
    <div class="line-row h23 d-flex align-items-center justify-content-between"><span>Швидкість перенесення фронту хмари <b class="v">v</b> (км/год)</span><span class="num">19.140</span></div>
    <div class="line-row h23 d-flex align-items-center justify-content-between"><span>Час підходу хмари <b class="v">t</b> (хв.)</span><span class="num">14.734</span></div>
    <div class="line-row d-flex align-items-center justify-content-between" style="height:41px;padding-top:2px"><span>Глибина розповсюдження хмари з моменту аварії <b class="v">Гр</b> (км)</span><span class="num">досягла<br>максимуму</span></div>
    <div class="accordion">
      <div class="accordion-item"><h2 class="accordion-header"><button class="accordion-button collapsed" type="button">Проміжні розрахунки</button></h2></div>
      <div class="accordion-item"><h2 class="accordion-header"><button class="accordion-button" type="button">Довідкова інформація про НХР</button></h2>
        <div class="accordion-body">Фосген (COCl₂). Безбарвний газ із характерним солодкуватим запахом<br>гнилих фруктів, прілого листя і мокрого сіна. Клас небезпеки - 2. ГДК у<br>повітрі робочої зони - 0,5 мг/м-3. Перевезення: у контейнерах,<br>залізничних і автомобільних цистернах, балонах, які можуть бути місцем<br>тимчасового зберігання. Зберігання: у зрідженому стані за температури<br>навколишнього середовища під тиском власних парів 6-18 кгс/см-2 у<br>наземних циліндричних горизонтальних резервуарах. Максимальний<br>об'єм зберігання - 52 т. Вибухо- та пожежонебезпека: негорючий. Під<br>час викиду (виливу) дуже швидко досягається небезпечна концентрація<br>цього газу в повітрі. У газоподібному стані в 3,5 рази важчий за повітря,<br>в рідкому - в 1,4 рази важчий за воду. Погано розчиняється у воді, легко<br>- в органічних розчинниках бензині, толуолі, ксилолі, оцтовій кислоті<br>тощо.</div></div>
      <div class="accordion-item"><h2 class="accordion-header"><button class="accordion-button collapsed" type="button">Ступені вертикальної стійкості повітря</button></h2></div>
    </div>
  </section>
</main>
<footer class="foot">© Victor Krzheminsky, 2022, krzheminsky@ukr.net</footer>
<script src="https://cdn.jsdelivr.net/npm/bootstrap@5.3.0/dist/js/bootstrap.bundle.min.js"></script>
</body>
</html>
